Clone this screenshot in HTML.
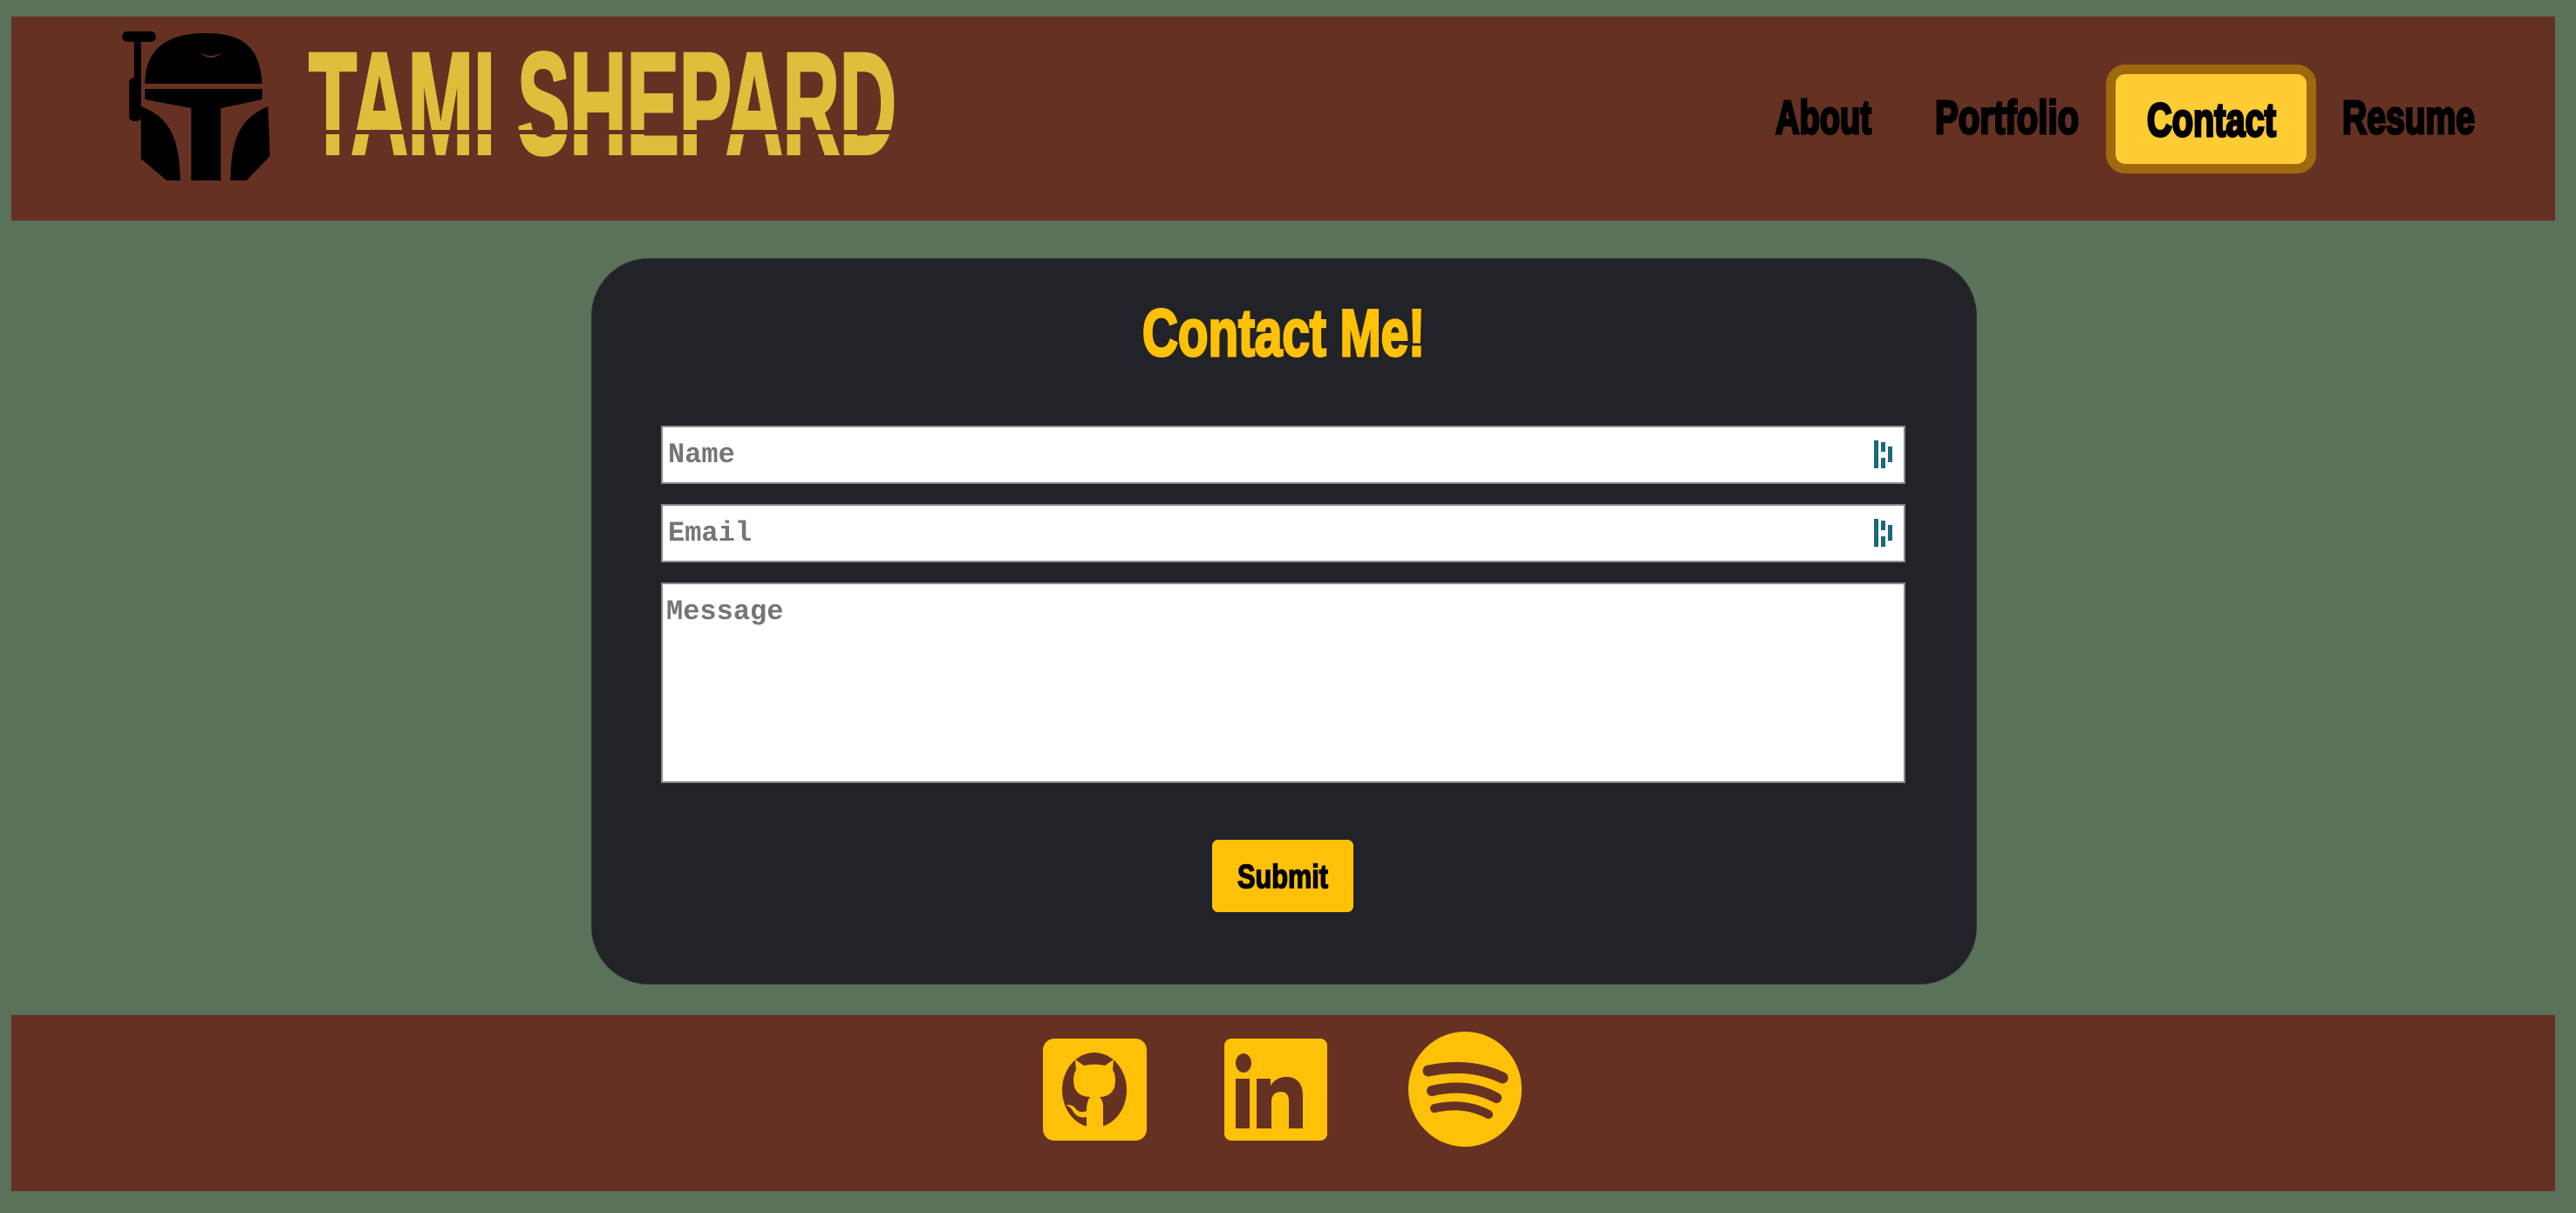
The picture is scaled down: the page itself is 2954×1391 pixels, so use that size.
<!DOCTYPE html>
<html><head><meta charset="utf-8"><style>
html,body{margin:0;padding:0}
body{width:2954px;height:1391px;background:#597259;position:relative;overflow:hidden;font-family:"Liberation Sans",sans-serif}
.abs{position:absolute}
.hdr{left:13px;top:19px;width:2917px;height:234px;background:#653123}
.ftr{left:13px;top:1164px;width:2917px;height:202px;background:#653123}
.card{left:678px;top:296px;width:1587px;height:831px;background:#212328;border-radius:66px;border:1px solid #333}
.inp{background:#fff;border:2px solid #888;box-sizing:border-box;font-family:"Liberation Mono",monospace;font-weight:bold;color:#757575;font-size:32px}
.btn{left:2415px;top:74px;width:241px;height:125px;background:#ffcc33;border:11px solid #a0680f;border-radius:22px;box-sizing:border-box}
</style></head><body>
<div class="abs hdr"></div>
<!-- helmet -->
<svg class="abs" style="left:138px;top:34px" width="175" height="176" viewBox="0 0 155 176" preserveAspectRatio="none">
<rect x="2" y="2" width="34" height="12" rx="5" fill="#000"/>
<rect x="14" y="10" width="7" height="90" fill="#000"/>
<rect x="9" y="55" width="12" height="50" rx="5" fill="#000"/>
<path d="M25 62 C25 20 50 4 87 4 C124 4 142 20 144 62 Z" fill="#000"/>
<path d="M80 26 Q92 38 104 26 Q92 34 80 26Z" fill="#653123"/>
<path d="M25 68 L144 68 L144 80 L102 90 L102 173 L112 173 C112 120 125 100 150 88 L152 145 L128 173 L47 173 L21 148 L21 88 C48 100 60 120 61 173 L72 173 L72 90 L25 80 Z" fill="#000"/>
</svg>
<svg class="abs" style="left:352px;top:52px" width="682" height="130">
<text x="2" y="124" font-family="Liberation Sans Narrow, Liberation Sans, sans-serif" font-weight="bold" font-size="166" fill="#e0bd3a" stroke="#e0bd3a" stroke-width="4" textLength="674" lengthAdjust="spacingAndGlyphs">TAMI SHEPARD</text>
<rect x="0" y="97" width="682" height="5" fill="#653123"/>
</svg>
<div class="abs btn"></div>
<svg class="abs" style="left:2000px;top:100px" width="900" height="70">
<g font-family="Liberation Sans Narrow, Liberation Sans, sans-serif" font-weight="bold" font-size="54" fill="#000" stroke="#000" stroke-width="3">
<text x="36" y="53" textLength="110" lengthAdjust="spacingAndGlyphs">About</text>
<text x="219" y="53" textLength="165" lengthAdjust="spacingAndGlyphs">Portfolio</text>
<text x="462" y="56" textLength="148" lengthAdjust="spacingAndGlyphs">Contact</text>
<text x="686" y="53" textLength="152" lengthAdjust="spacingAndGlyphs">Resume</text>
</g></svg>

<div class="abs card"></div>
<svg class="abs" style="left:1300px;top:340px" width="350" height="80">
<text x="10" y="68" font-family="Liberation Sans Narrow, Liberation Sans, sans-serif" font-weight="bold" font-size="76" fill="#ffc107" stroke="#ffc107" stroke-width="3" textLength="324" lengthAdjust="spacingAndGlyphs">Contact Me!</text>
</svg>
<div class="abs inp" style="left:758px;top:488px;width:1427px;height:67px;padding:13px 6px">Name</div>
<div class="abs inp" style="left:758px;top:578px;width:1427px;height:67px;padding:13px 6px">Email</div>
<div class="abs inp" style="left:758px;top:668px;width:1427px;height:230px;padding:13px 4px">Message</div>
<svg class="abs" style="left:2146px;top:503px" width="30" height="40"><g fill="#186a7a"><rect x="3" y="2" width="5" height="32"/><rect x="11" y="4" width="5" height="11"/><rect x="11" y="22" width="5" height="12"/><rect x="19" y="9" width="5" height="18"/></g></svg>
<svg class="abs" style="left:2146px;top:593px" width="30" height="40"><g fill="#186a7a"><rect x="3" y="2" width="5" height="32"/><rect x="11" y="4" width="5" height="11"/><rect x="11" y="22" width="5" height="12"/><rect x="19" y="9" width="5" height="18"/></g></svg>
<div class="abs" style="left:1390px;top:963px;width:162px;height:83px;background:#ffc107;border-radius:7px"></div>
<svg class="abs" style="left:1390px;top:963px" width="162" height="83"><text x="81" y="55" text-anchor="middle" font-family="Liberation Sans Narrow, Liberation Sans, sans-serif" font-weight="bold" font-size="38" fill="#000" stroke="#000" stroke-width="1.5" textLength="104" lengthAdjust="spacingAndGlyphs">Submit</text></svg>

<div class="abs ftr"></div>
<svg class="abs" style="left:1196px;top:1191px" width="119" height="117" viewBox="0 0 119 117">
<rect width="119" height="117" rx="13" fill="#ffc107"/>
<ellipse cx="59" cy="59" rx="37" ry="43" fill="#653123"/>
<path d="M35 48 Q35 40 38 36 L37 24 L47 31 Q59 28 71 31 L81 24 L80 36 Q83 40 83 48 Q83 66 65 67 Q69 71 69 78 L69 102 L50 102 L50 90 Q40 92 35 84 Q32 78 26 76 Q34 75 38 81 Q43 86 50 83 Q50 72 54 67 Q35 66 35 48Z" fill="#ffc107"/>
</svg>
<svg class="abs" style="left:1404px;top:1191px" width="118" height="117" viewBox="0 0 118 117">
<rect width="118" height="117" rx="8" fill="#ffc107"/>
<ellipse cx="22" cy="28" rx="9" ry="11" fill="#653123"/>
<rect x="13" y="46" width="16" height="57" fill="#653123"/>
<path d="M37 46 L53 46 L53 54 Q60 43 74 44 Q90 46 90 66 L90 103 L74 103 L74 72 Q74 61 65 61 Q54 61 54 73 L54 103 L37 103Z" fill="#653123"/>
</svg>
<svg class="abs" style="left:1615px;top:1183px" width="130" height="132" viewBox="0 0 130 132">
<ellipse cx="65" cy="66" rx="65" ry="66" fill="#ffc107"/>
<g stroke="#653123" stroke-linecap="round" fill="none">
<path d="M23 45 Q70 35 108 53" stroke-width="13"/>
<path d="M27 68 Q68 58 101 76" stroke-width="12"/>
<path d="M30 88 Q64 80 92 95" stroke-width="10"/>
</g></svg>
</body></html>
